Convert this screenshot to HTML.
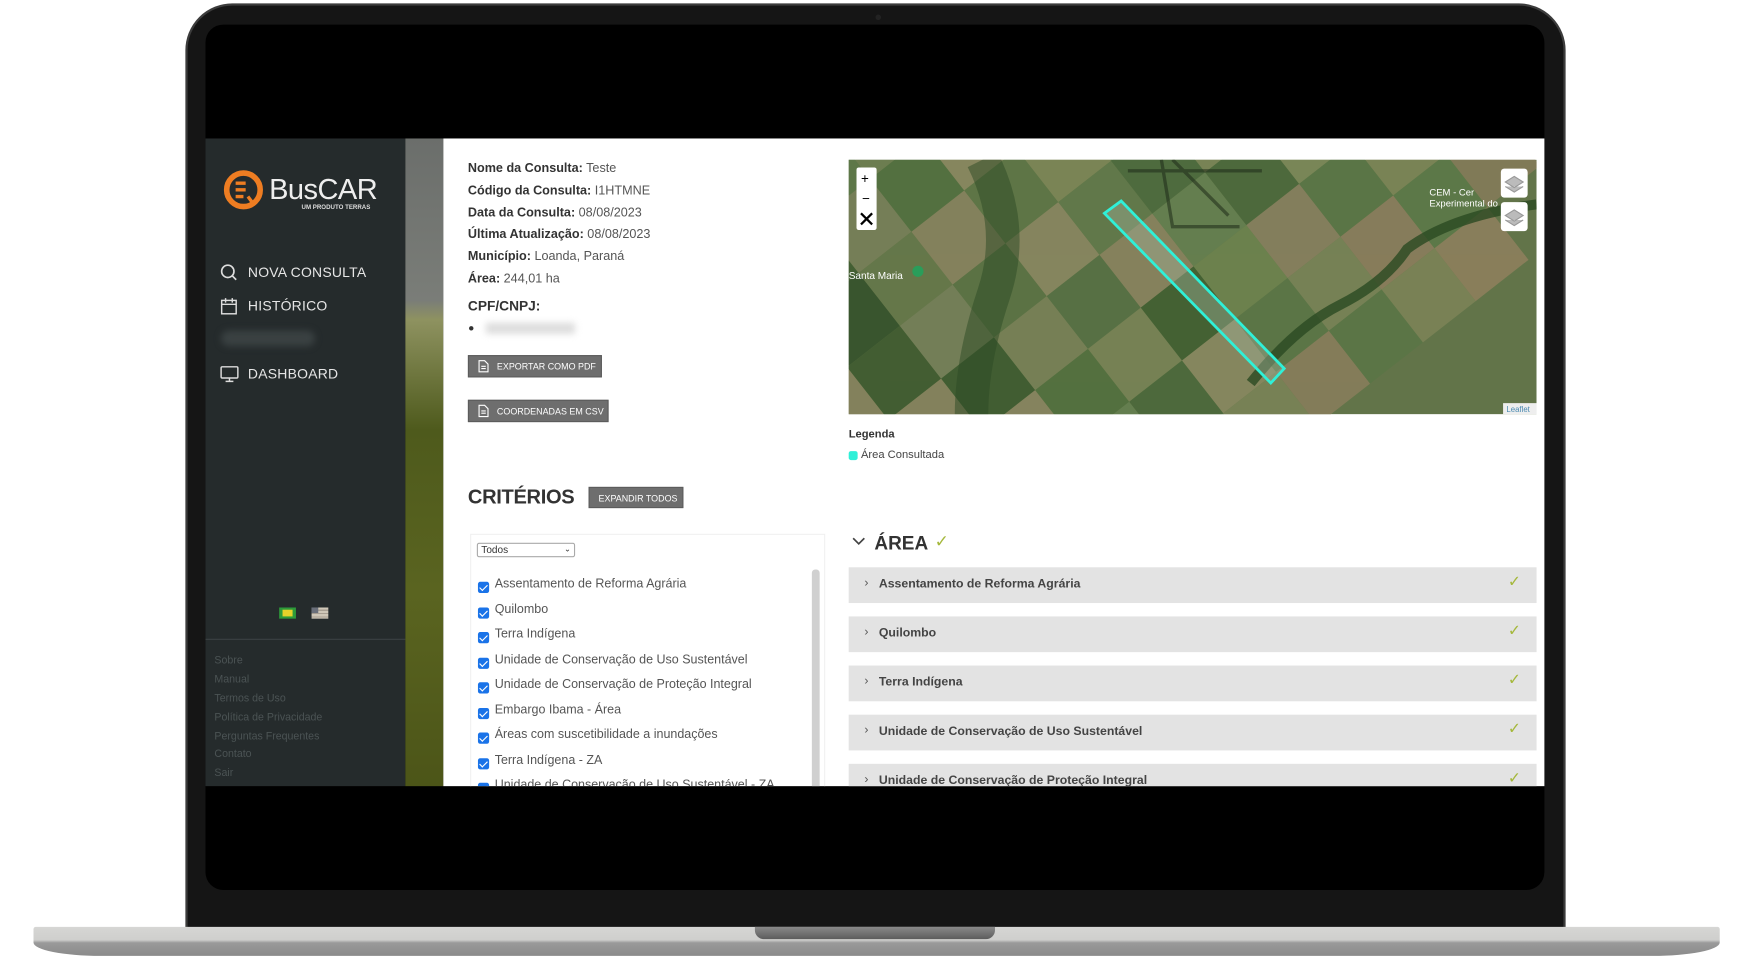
<!DOCTYPE html>
<html><head><meta charset="utf-8">
<style>
*{margin:0;padding:0;box-sizing:border-box}
html,body{width:1751px;height:975px;overflow:hidden;background:#fff;font-family:"Liberation Sans",sans-serif}
#stage{position:absolute;left:0;top:0;width:1568px;height:873px;transform:scale(1.1167);transform-origin:0 0}
.abs{position:absolute}
.body{left:166px;top:3px;width:1236px;height:840px;border-radius:42px 42px 6px 6px;background:#151515;border:2px solid #3c3c3c}
.screen{left:184px;top:22px;width:1199px;height:775px;background:#000;border-radius:16px}
.base{left:30px;top:830px;width:1510px;height:26px;border-radius:2px 2px 60px 60px/2px 2px 12px 12px;background:linear-gradient(#d6d6d4 0,#cfcfcd 45%,#9a9a9a 55%,#8a8a8a 100%)}
.notch{left:676px;top:830px;width:215px;height:11px;border-radius:0 0 8px 8px;background:linear-gradient(#8a8a8a,#5c5c5c)}
.side{left:184px;top:124px;width:179px;height:580px;background:#252b2c}
.strip{left:363px;top:124px;width:34px;height:580px;background:linear-gradient(#6b6e6b 0,#7a7d78 25%,#8e9260 28%,#4e5a1c 45%,#5a6420 70%,#4c5518 100%)}
.main{left:397px;top:124px;width:986px;height:580px;background:#fff;overflow:hidden}
.nav{position:absolute;left:38px;color:#e6e6e6;font-size:12.5px;letter-spacing:.2px}
.nav svg{position:absolute;left:-25px;top:-1px}
.foot{position:absolute;left:8px;color:#4b5354;font-size:9.5px}
.info{position:absolute;left:22px;font-size:11.3px;color:#555}
.info b{color:#333;font-weight:bold}
.btn{position:absolute;background:#6e6e6e;color:#fff;font-size:8px;height:20px;line-height:20px;padding-left:25px;border:1px solid #5c5c5c}
.cb{position:absolute;left:31px;width:10px;height:10px;background:#1a73e8;border-radius:2px}
.cb:after{content:"";position:absolute;left:3px;top:1px;width:3px;height:6px;border:solid #fff;border-width:0 1.5px 1.5px 0;transform:rotate(45deg)}
.ci{position:absolute;left:46px;font-size:11.2px;color:#555}
.row{position:absolute;left:363px;width:616px;height:32px;background:#e3e3e3}
.row span{position:absolute;left:27px;top:9px;font-size:11px;color:#444;font-weight:bold}
.row i{position:absolute;left:14px;top:8px;font-style:normal;font-size:11px;color:#555}
.row em{position:absolute;right:14px;top:4px;font-style:normal;color:#a5b83c;font-size:14px}
</style></head><body>
<div id="stage">
<div class="abs body"></div>
<div class="abs base"></div>
<div class="abs notch"></div>
<div class="abs screen"></div>
<div class="abs" style="left:784px;top:13px;width:5px;height:5px;border-radius:50%;background:#222"></div>
<div class="abs side">
  <svg class="abs" style="left:16px;top:28px" width="36" height="38" viewBox="0 0 36 38"><circle cx="18" cy="18" r="15" fill="none" stroke="#ee7d22" stroke-width="5"/><path d="M11 12h9M11 18h9M11 24h7M22 24l6 8" stroke="#ee7d22" stroke-width="3" fill="none"/></svg>
  <div class="abs" style="left:57px;top:30px;color:#eee;font-size:26px;letter-spacing:-.5px">BusCAR</div>
  <div class="abs" style="left:86px;top:59px;color:#ddd;font-size:5.5px;font-weight:bold">UM PRODUTO TERRAS</div>
  <div class="nav" style="top:113px"><svg width="16" height="16" viewBox="0 0 16 16"><circle cx="7" cy="7" r="5.5" fill="none" stroke="#ddd" stroke-width="1.5"/><path d="M11 11l3.5 3.5" stroke="#ddd" stroke-width="1.5"/></svg>NOVA CONSULTA</div>
  <div class="nav" style="top:143px"><svg width="16" height="16" viewBox="0 0 16 16"><rect x="1.5" y="3" width="13" height="12" fill="none" stroke="#ddd" stroke-width="1.3"/><path d="M1.5 6.5h13M5 1v4M11 1v4" stroke="#ddd" stroke-width="1.3"/></svg>HISTÓRICO</div>
  <div class="abs" style="left:14px;top:172px;width:84px;height:14px;border-radius:7px;background:#3a4142;filter:blur(3px)"></div>
  <div class="nav" style="top:204px"><svg width="17" height="16" viewBox="0 0 17 16"><rect x="1" y="1.5" width="15" height="10" rx="1" fill="none" stroke="#ddd" stroke-width="1.3"/><path d="M8.5 11.5v3M5 14.5h7" stroke="#ddd" stroke-width="1.3"/></svg>DASHBOARD</div>
  <div class="abs" style="left:66px;top:420px;width:15px;height:10px;background:#2d9a3a"><div style="margin:2px 3px;width:9px;height:6px;background:#e6d22a"></div></div>
  <div class="abs" style="left:95px;top:420px;width:15px;height:10px;background:repeating-linear-gradient(#cfc7b8 0 2px,#a89f92 2px 3px)"><div style="width:6px;height:5px;background:#6a6f7a"></div></div>
  <div class="abs" style="left:0;top:448px;width:179px;height:1px;background:#3b4243"></div>
  <div class="foot" style="top:462px">Sobre</div>
  <div class="foot" style="top:479px">Manual</div>
  <div class="foot" style="top:496px">Termos de Uso</div>
  <div class="foot" style="top:513px">Política de Privacidade</div>
  <div class="foot" style="top:530px">Perguntas Frequentes</div>
  <div class="foot" style="top:546px">Contato</div>
  <div class="foot" style="top:563px">Sair</div>
</div>
<div class="abs strip"></div>
<div class="abs main">
  <div class="info" style="top:21px"><b>Nome da Consulta:</b> Teste</div>
  <div class="info" style="top:41px"><b>Código da Consulta:</b> I1HTMNE</div>
  <div class="info" style="top:61px"><b>Data da Consulta:</b> 08/08/2023</div>
  <div class="info" style="top:80px"><b>Última Atualização:</b> 08/08/2023</div>
  <div class="info" style="top:100px"><b>Município:</b> Loanda, Paraná</div>
  <div class="info" style="top:120px"><b>Área:</b> 244,01 ha</div>
  <div class="info" style="top:143px;font-size:12.3px;color:#333;font-weight:bold">CPF/CNPJ:</div>
  <div class="abs" style="left:23px;top:168px;width:4px;height:4px;border-radius:50%;background:#333"></div>
  <div class="abs" style="left:38px;top:165px;width:80px;height:10px;background:#ddd;filter:blur(3px)"></div>
  <div class="btn" style="left:22px;top:194px;width:120px">EXPORTAR COMO PDF</div>
  <div class="btn" style="left:22px;top:234px;width:126px">COORDENADAS EM CSV</div>
  <svg class="abs" style="left:31px;top:198px" width="10" height="12" viewBox="0 0 10 12"><path d="M1 1h5l3 3v7H1z" fill="none" stroke="#fff"/><path d="M3 6h4M3 8h4" stroke="#fff"/></svg>
  <svg class="abs" style="left:31px;top:238px" width="10" height="12" viewBox="0 0 10 12"><path d="M1 1h5l3 3v7H1z" fill="none" stroke="#fff"/><path d="M3 6h4M3 8h4" stroke="#fff"/></svg>
  <div class="abs" style="left:22px;top:311px;font-size:18px;font-weight:bold;color:#333;letter-spacing:-.3px">CRITÉRIOS</div>
  <div class="btn" style="left:130px;top:312px;width:85px;padding-left:8px;height:19px;line-height:19px">EXPANDIR TODOS</div>
  <div class="abs" style="left:24px;top:354px;width:318px;height:240px;border:1px solid #f0f0f0"></div>
  <div class="abs" style="left:30px;top:362px;width:88px;height:13px;border:1px solid #aaa;border-radius:2px;font-size:9px;color:#333;padding-left:3px;line-height:11px">Todos<span style="position:absolute;right:3px;font-size:7px">&#8964;</span></div>
  <div class="abs" style="left:330px;top:386px;width:7px;height:200px;border-radius:3px;background:#d0d0d0"></div>
  <div class="cb" style="top:397px"></div><div class="ci" style="top:393px">Assentamento de Reforma Agrária</div>
  <div class="cb" style="top:420px"></div><div class="ci" style="top:416px">Quilombo</div>
  <div class="cb" style="top:442px"></div><div class="ci" style="top:438px">Terra Indígena</div>
  <div class="cb" style="top:465px"></div><div class="ci" style="top:461px">Unidade de Conservação de Uso Sustentável</div>
  <div class="cb" style="top:487px"></div><div class="ci" style="top:483px">Unidade de Conservação de Proteção Integral</div>
  <div class="cb" style="top:510px"></div><div class="ci" style="top:506px">Embargo Ibama - Área</div>
  <div class="cb" style="top:532px"></div><div class="ci" style="top:528px">Áreas com suscetibilidade a inundações</div>
  <div class="cb" style="top:555px"></div><div class="ci" style="top:551px">Terra Indígena - ZA</div>
  <div class="cb" style="top:577px"></div><div class="ci" style="top:573px">Unidade de Conservação de Uso Sustentável - ZA</div>
  <!-- map -->
  <svg class="abs" style="left:363px;top:19px" width="616" height="228" viewBox="0 0 616 228">
    <rect width="616" height="228" fill="#627449"/>
    <g transform="rotate(-38 308 114)" opacity=".85">
      <rect x="-100" y="-200" width="60" height="60" fill="#7b7a55"/><rect x="-40" y="-200" width="60" height="60" fill="#4e6a3a"/><rect x="20" y="-200" width="60" height="60" fill="#8a8660"/><rect x="80" y="-200" width="60" height="60" fill="#5d7848"/><rect x="140" y="-200" width="60" height="60" fill="#6f7f52"/><rect x="200" y="-200" width="60" height="60" fill="#4f6d3d"/><rect x="260" y="-200" width="60" height="60" fill="#7c8a5a"/><rect x="320" y="-200" width="60" height="60" fill="#5a7a46"/><rect x="380" y="-200" width="60" height="60" fill="#8b8460"/><rect x="440" y="-200" width="60" height="60" fill="#637d4b"/>
      <rect x="-100" y="-140" width="60" height="60" fill="#5a6d40"/><rect x="-40" y="-140" width="60" height="60" fill="#8a7f5c"/><rect x="20" y="-140" width="60" height="60" fill="#3f5c30"/><rect x="80" y="-140" width="60" height="60" fill="#7a805a"/><rect x="140" y="-140" width="60" height="60" fill="#52703f"/><rect x="200" y="-140" width="60" height="60" fill="#8d8a62"/><rect x="260" y="-140" width="60" height="60" fill="#5d7a48"/><rect x="320" y="-140" width="60" height="60" fill="#729052"/><rect x="380" y="-140" width="60" height="60" fill="#5a7444"/><rect x="440" y="-140" width="60" height="60" fill="#867e5c"/><rect x="500" y="-140" width="60" height="60" fill="#6a8450"/>
      <rect x="-100" y="-80" width="60" height="60" fill="#84805a"/><rect x="-40" y="-80" width="60" height="60" fill="#4a6438"/><rect x="20" y="-80" width="60" height="60" fill="#33502a"/><rect x="80" y="-80" width="60" height="60" fill="#66784a"/><rect x="140" y="-80" width="60" height="60" fill="#8a8460"/><rect x="200" y="-80" width="60" height="60" fill="#5e7646"/><rect x="260" y="-80" width="60" height="60" fill="#7f8858"/><rect x="320" y="-80" width="60" height="60" fill="#5a7a48"/><rect x="380" y="-80" width="60" height="60" fill="#6f8650"/><rect x="440" y="-80" width="60" height="60" fill="#4f6c3c"/><rect x="500" y="-80" width="60" height="60" fill="#8a8060"/><rect x="560" y="-80" width="60" height="60" fill="#5e7a48"/>
      <rect x="-100" y="-20" width="60" height="60" fill="#6a7a4c"/><rect x="-40" y="-20" width="60" height="60" fill="#8a8460"/><rect x="20" y="-20" width="60" height="60" fill="#3e5a2e"/><rect x="80" y="-20" width="60" height="60" fill="#77805a"/><rect x="140" y="-20" width="60" height="60" fill="#5a7244"/><rect x="200" y="-20" width="60" height="60" fill="#8c8862"/><rect x="260" y="-20" width="60" height="60" fill="#627a4a"/><rect x="320" y="-20" width="60" height="60" fill="#4c6a3c"/><rect x="380" y="-20" width="60" height="60" fill="#7d8658"/><rect x="440" y="-20" width="60" height="60" fill="#5a7646"/><rect x="500" y="-20" width="60" height="60" fill="#8e7c5c"/><rect x="560" y="-20" width="60" height="60" fill="#6a8250"/><rect x="620" y="-20" width="60" height="60" fill="#887c5a"/>
      <rect x="-100" y="40" width="60" height="60" fill="#4a6838"/><rect x="-40" y="40" width="60" height="60" fill="#6e7c4e"/><rect x="20" y="40" width="60" height="60" fill="#8a8460"/><rect x="80" y="40" width="60" height="60" fill="#3c5a2e"/><rect x="140" y="40" width="60" height="60" fill="#7a8258"/><rect x="200" y="40" width="60" height="60" fill="#567044"/><rect x="260" y="40" width="60" height="60" fill="#8c8460"/><rect x="320" y="40" width="60" height="60" fill="#668050"/><rect x="380" y="40" width="60" height="60" fill="#4a683a"/><rect x="440" y="40" width="60" height="60" fill="#7e8a5a"/><rect x="500" y="40" width="60" height="60" fill="#5c7848"/><rect x="560" y="40" width="60" height="60" fill="#8a8260"/><rect x="620" y="40" width="60" height="60" fill="#6a7c4e"/>
      <rect x="-100" y="100" width="60" height="60" fill="#7a7e56"/><rect x="-40" y="100" width="60" height="60" fill="#3e5c30"/><rect x="20" y="100" width="60" height="60" fill="#6a7a4c"/><rect x="80" y="100" width="60" height="60" fill="#8c8662"/><rect x="140" y="100" width="60" height="60" fill="#52703e"/><rect x="200" y="100" width="60" height="60" fill="#7a8456"/><rect x="260" y="100" width="60" height="60" fill="#3f5e30"/><rect x="320" y="100" width="60" height="60" fill="#6e844e"/><rect x="380" y="100" width="60" height="60" fill="#8a8060"/><rect x="440" y="100" width="60" height="60" fill="#5a7646"/><rect x="500" y="100" width="60" height="60" fill="#7e8658"/><rect x="560" y="100" width="60" height="60" fill="#927e5e"/><rect x="620" y="100" width="60" height="60" fill="#5e784a"/>
      <rect x="-40" y="160" width="60" height="60" fill="#7c7c56"/><rect x="20" y="160" width="60" height="60" fill="#4e6c3c"/><rect x="80" y="160" width="60" height="60" fill="#8a8460"/><rect x="140" y="160" width="60" height="60" fill="#668050"/><rect x="200" y="160" width="60" height="60" fill="#4a683a"/><rect x="260" y="160" width="60" height="60" fill="#8c8a62"/><rect x="320" y="160" width="60" height="60" fill="#5a7646"/><rect x="380" y="160" width="60" height="60" fill="#7a8458"/><rect x="440" y="160" width="60" height="60" fill="#8e7e5e"/><rect x="500" y="160" width="60" height="60" fill="#5c7a48"/><rect x="560" y="160" width="60" height="60" fill="#867c5a"/>
      <rect x="20" y="220" width="60" height="60" fill="#6a7a4c"/><rect x="80" y="220" width="60" height="60" fill="#4e6c3c"/><rect x="140" y="220" width="60" height="60" fill="#8a8460"/><rect x="200" y="220" width="60" height="60" fill="#5e784a"/><rect x="260" y="220" width="60" height="60" fill="#7c8458"/><rect x="320" y="220" width="60" height="60" fill="#8a7e5c"/><rect x="380" y="220" width="60" height="60" fill="#5a7646"/><rect x="440" y="220" width="60" height="60" fill="#7e8458"/><rect x="500" y="220" width="60" height="60" fill="#90805e"/>
    </g>
    <path d="M120 0q30 60 10 120t-20 108" stroke="#2c4a24" stroke-width="30" fill="none" opacity=".5"/>
    <path d="M360 200q40-50 80-70t60-50q40-30 116-40" stroke="#2a4a22" stroke-width="9" fill="none" opacity=".8"/>
    <path d="M280 0l10 60 60 0M290 0l50 50 M250 10h120" stroke="#1e2a18" stroke-width="3" fill="none" opacity=".55"/>
    <path d="M229 48l15-11 146 150-12 13z" fill="#9cae94" fill-opacity=".45" stroke="#2ff0d8" stroke-width="2.5"/>
    <text x="0" y="107" font-size="9" fill="#fff" font-family="Liberation Sans">Santa Maria</text>
    <circle cx="62" cy="100" r="5" fill="#2a9d5a"/>
    <text x="520" y="32" font-size="8.5" fill="#fff" font-family="Liberation Sans">CEM - Cer</text>
    <text x="520" y="42" font-size="8.5" fill="#fff" font-family="Liberation Sans">Experimental do</text>
    <rect x="7" y="7" width="18" height="56" rx="2" fill="#fff"/>
    <text x="11" y="21" font-size="12" font-family="Liberation Sans">+</text>
    <text x="12" y="39" font-size="12" font-family="Liberation Sans">−</text>
    <path d="M11 48l10 10M21 48l-10 10" stroke="#000" stroke-width="2"/>
    <rect x="584" y="8" width="24" height="26" rx="3" fill="#fff"/>
    <rect x="584" y="38" width="24" height="26" rx="3" fill="#fff"/>
    <path d="M588 20l8-5 8 5-8 5z M588 24l8 5 8-5" fill="#bbb" stroke="#999"/>
    <path d="M588 50l8-5 8 5-8 5z M588 54l8 5 8-5" fill="#bbb" stroke="#999"/>
    <rect x="586" y="218" width="30" height="10" fill="#eee"/>
    <text x="589" y="226" font-size="7" fill="#4a8ab0" font-family="Liberation Sans">Leaflet</text>
  </svg>
  <div class="abs" style="left:363px;top:260px;font-size:10px;color:#333;font-weight:bold">Legenda</div>
  <div class="abs" style="left:363px;top:280px;width:8px;height:8px;border-radius:2px;background:#2ff0d8"></div>
  <div class="abs" style="left:374px;top:278px;font-size:10px;color:#444">Área Consultada</div>
  <svg class="abs" style="left:366px;top:357px" width="12" height="8"><path d="M1 1l5 5 5-5" stroke="#444" stroke-width="1.5" fill="none"/></svg>
  <div class="abs" style="left:386px;top:353px;font-size:17px;font-weight:bold;color:#333">ÁREA</div>
  <div class="abs" style="left:440px;top:352px;font-size:15px;color:#a5b83c">✓</div>
  <div class="row" style="top:384px"><i>›</i><span>Assentamento de Reforma Agrária</span><em>✓</em></div>
  <div class="row" style="top:428px"><i>›</i><span>Quilombo</span><em>✓</em></div>
  <div class="row" style="top:472px"><i>›</i><span>Terra Indígena</span><em>✓</em></div>
  <div class="row" style="top:516px"><i>›</i><span>Unidade de Conservação de Uso Sustentável</span><em>✓</em></div>
  <div class="row" style="top:560px"><i>›</i><span>Unidade de Conservação de Proteção Integral</span><em>✓</em></div>
</div>
</div>
</body></html>
